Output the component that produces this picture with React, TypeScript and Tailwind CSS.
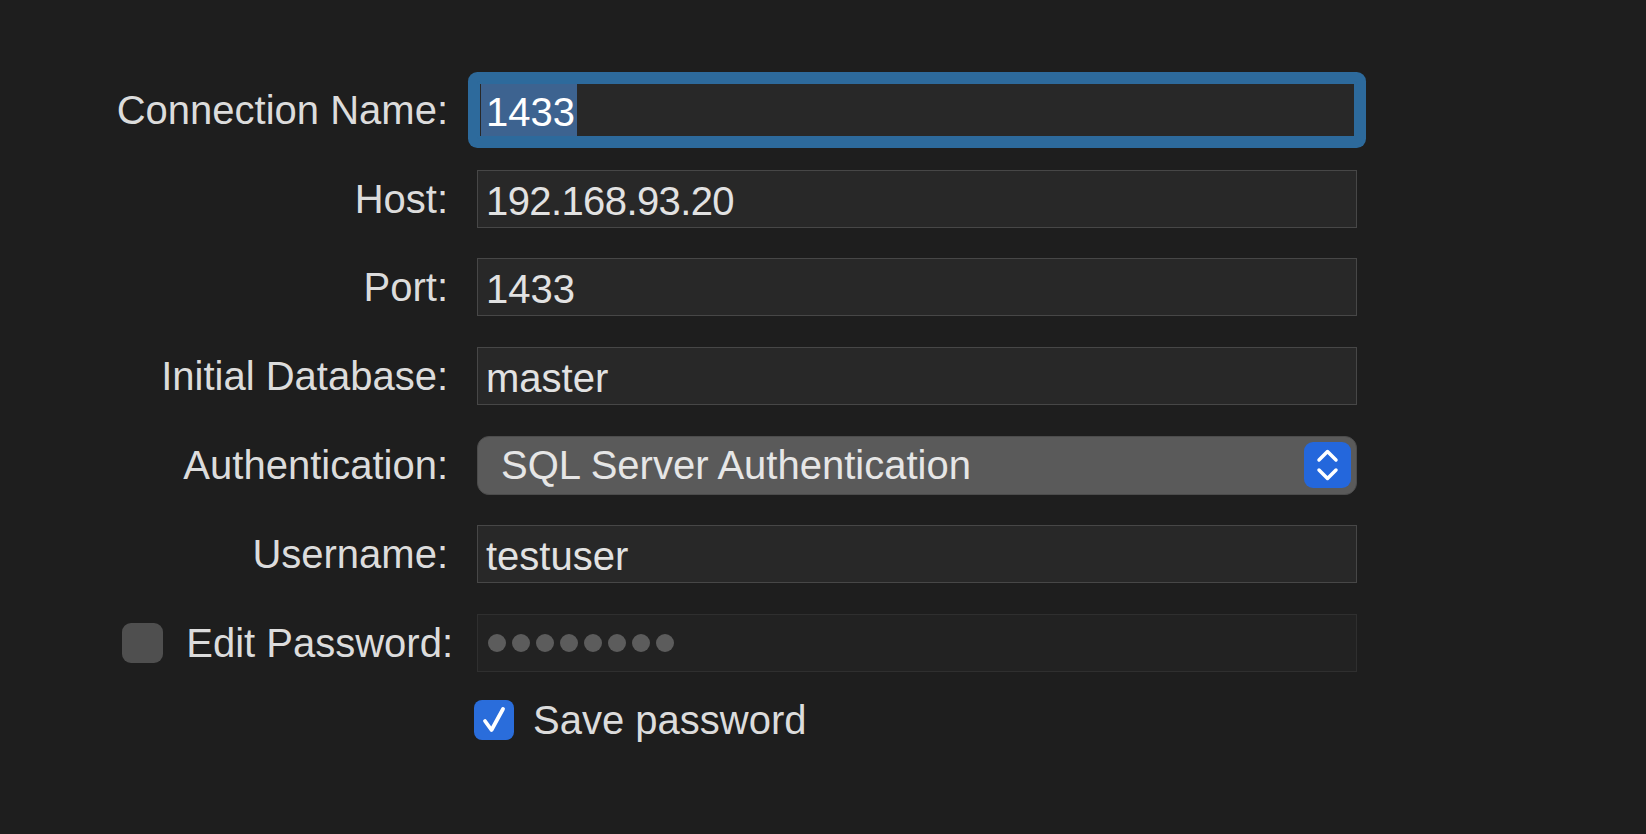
import React from 'react';

const font = { fontFamily: '"Liberation Sans", Arial, sans-serif' };

const Label: React.FC<{ children: React.ReactNode }> = ({ children }) => (
  <div className="w-[448px] shrink-0 text-right text-[40px] leading-none text-[#dcdcdc]">{children}</div>
);

const TextField: React.FC<{ value: string; className?: string }> = ({ value, className = '' }) => (
  <div className="ml-[29px] flex h-[58px] w-[880px] items-center border border-[#474747] bg-[#282828] pl-[8px] pt-[4px] text-[40px] leading-none text-[#e2e2e2]">
    <span className={className}>{value}</span>
  </div>
);

const Stepper = () => (
  <svg width="47" height="46" viewBox="0 0 47 46">
    <rect width="47" height="46" rx="9" fill="#2467dc" />
    <path d="M15 18 L23.5 9.5 L32 18" fill="none" stroke="#fff" strokeWidth="3.5" strokeLinecap="round" strokeLinejoin="round" />
    <path d="M15 28 L23.5 36.5 L32 28" fill="none" stroke="#fff" strokeWidth="3.5" strokeLinecap="round" strokeLinejoin="round" />
  </svg>
);

const App: React.FC = () => {
  return (
    <div className="h-[834px] w-full overflow-hidden bg-[#1e1e1e] pt-[81px]" style={font}>
      <div className="flex flex-col gap-[30.7px]">
        {/* Connection Name (focused) */}
        <div className="flex items-center">
          <Label>Connection Name:</Label>
          <div className="ml-[29px] flex h-[58px] w-[880px] items-stretch rounded-[3px] border-[3px] border-[#2d6a9c] bg-[#282828] pl-[1px] shadow-[0_0_0_9px_#2d6a9c]">
            <span className="flex items-center bg-[#3d6390] pl-[5px] pr-[2px] pt-[4px] text-[40px] leading-none text-white">1433</span>
          </div>
        </div>

        <div className="flex items-center">
          <Label>Host:</Label>
          <TextField value="192.168.93.20" className="tracking-[-0.015em]" />
        </div>

        <div className="flex items-center">
          <Label>Port:</Label>
          <TextField value="1433" />
        </div>

        <div className="flex items-center">
          <Label>Initial Database:</Label>
          <TextField value="master" />
        </div>

        {/* Authentication popup */}
        <div className="flex items-center">
          <Label>Authentication:</Label>
          <div className="ml-[29px] flex h-[59px] w-[880px] items-center justify-between rounded-[12px] border border-[#4c4c4c] bg-[#5a5a5a] pl-[23px] pr-[5px]">
            <span className="text-[40px] leading-none text-[#e6e6e6]">SQL Server Authentication</span>
            <Stepper />
          </div>
        </div>

        <div className="flex items-center">
          <Label>Username:</Label>
          <TextField value="testuser" />
        </div>

        {/* Edit password */}
        <div className="flex items-center">
          <div className="flex w-[453px] shrink-0 items-center pl-[122px]">
            <div className="h-[40px] w-[41px] rounded-[9px] bg-[#4f4f4f]" />
            <span className="ml-auto text-[40px] leading-none text-[#dcdcdc]">Edit Password:</span>
          </div>
          <div className="ml-[24px] flex h-[58px] w-[880px] items-center gap-[6px] border border-[#2f2f2f] bg-[#222222] pl-[10px]">
            {Array.from({ length: 8 }).map((_, i) => (
              <span key={i} className="h-[18px] w-[18px] rounded-full bg-[#5c5c5c]" />
            ))}
          </div>
        </div>
      </div>

      {/* Save password */}
      <div className="mt-[28px] flex items-center pl-[474px]">
        <div className="flex h-[40px] w-[40px] items-center justify-center rounded-[8px] bg-[#2a6ddb]">
          <svg width="30" height="30" viewBox="0 0 30 30">
            <path d="M6 16 L12.5 25 L24 4" fill="none" stroke="#fff" strokeWidth="3.8" strokeLinecap="round" strokeLinejoin="round" />
          </svg>
        </div>
        <span className="ml-[19px] text-[40px] leading-none text-[#dcdcdc]">Save password</span>
      </div>
    </div>
  );
};

export default App;
